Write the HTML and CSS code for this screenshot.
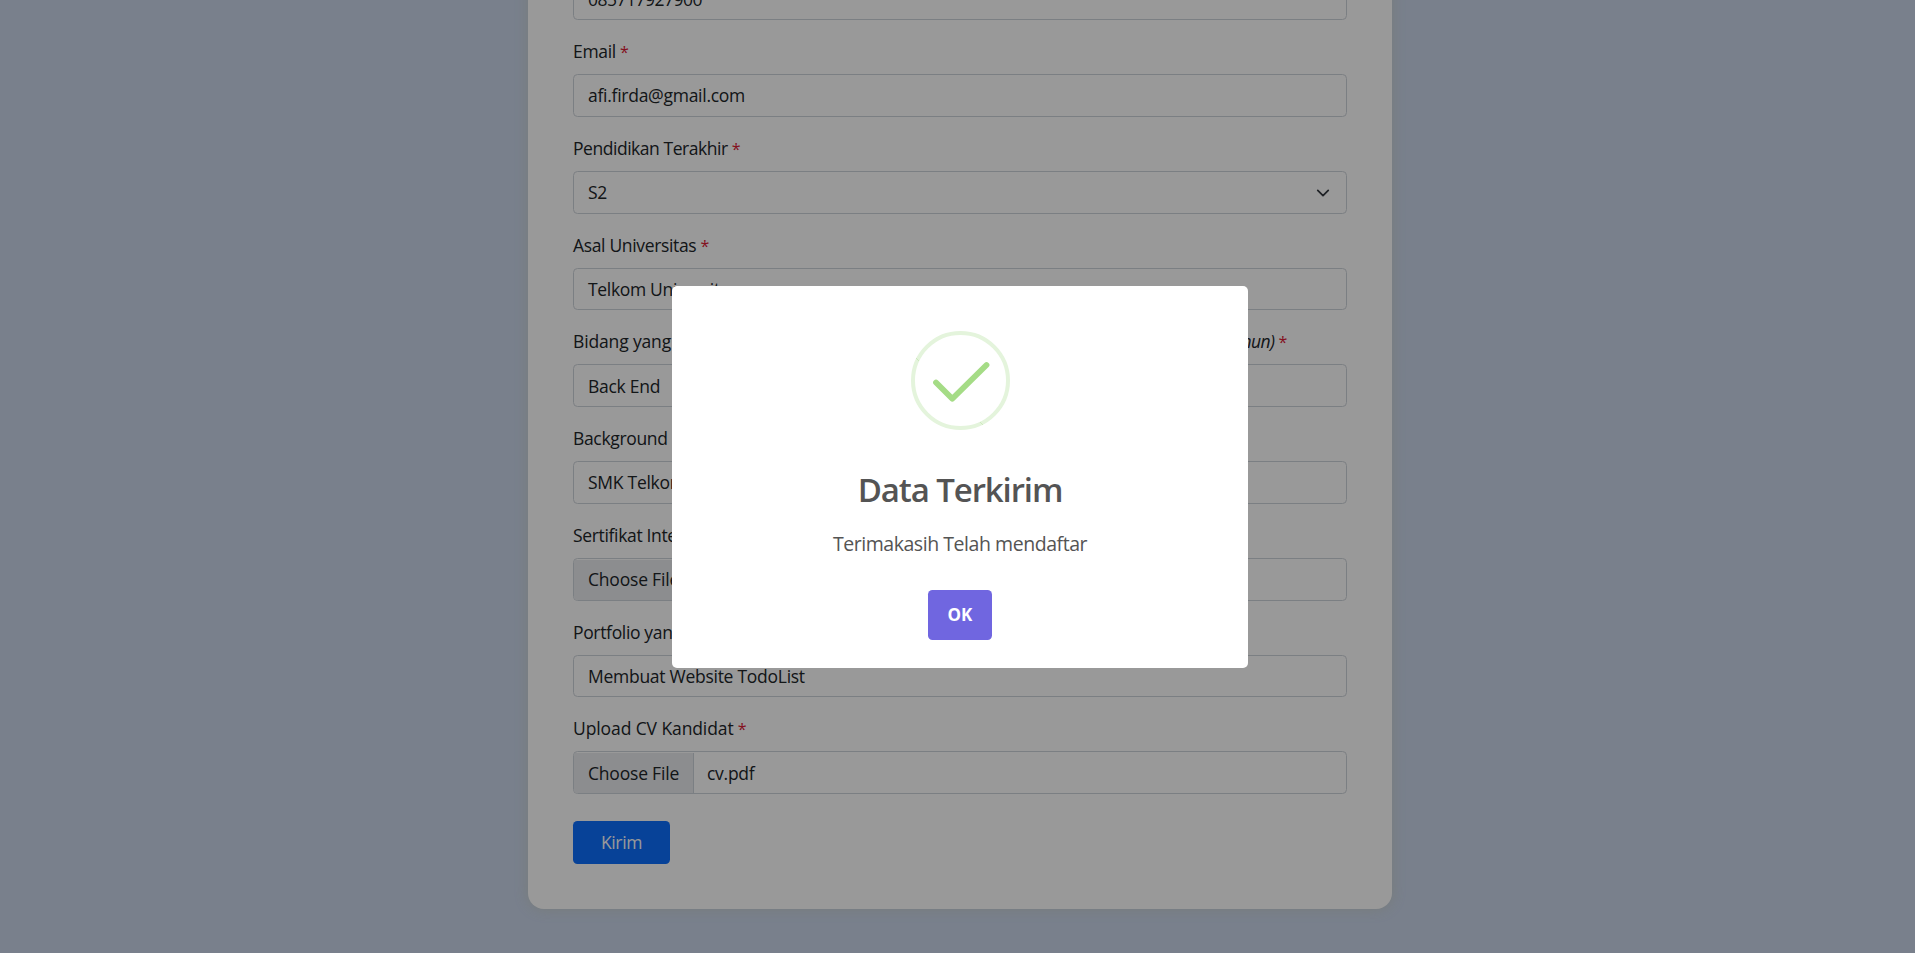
FILE: index.html
```html
<!DOCTYPE html>
<html lang="id">
<head>
<meta charset="utf-8">
<title>Form Pendaftaran</title>
<link rel="stylesheet" href="styles.css">
</head>
<body>
<main class="page">
  <form class="card">
    <div class="field"><div class="control"><span class="t-phone">085717927900</span></div></div>
    <div class="field"><label class="label">Email <span class="req">*</span></label><div class="control"><span>afi.firda@gmail.com</span></div></div>
    <div class="field"><label class="label"><span class="t-pend">Pendidikan Terakhir</span> <span class="req">*</span></label><div class="control select"><span>S2</span><svg class="chevron" viewBox="0 0 16 16"><path d="M2 5l6 6 6-6" fill="none" stroke="#343a40" stroke-width="2" stroke-linecap="round" stroke-linejoin="round"/></svg></div></div>
    <div class="field"><label class="label">Asal Universitas <span class="req">*</span></label><div class="control"><span class="t-univ">Telkom University</span></div></div>
    <div class="field"><label class="label wide"><span class="t-bidang">Bidang yang dikuasai</span><span><i class="t-tahun">(tahun)</i> <span class="req">*</span></span></label><div class="control"><span>Back End</span></div></div>
    <div class="field"><label class="label">Background</label><div class="control"><span>SMK Telkom</span></div></div>
    <div class="field"><label class="label">Sertifikat Inter</label><div class="control file"><span class="choose">Choose File</span></div></div>
    <div class="field"><label class="label">Portfolio yang</label><div class="control"><span>Membuat Website TodoList</span></div></div>
    <div class="field"><label class="label"><span class="t-upload">Upload CV Kandidat</span> <span class="req">*</span></label><div class="control file"><span class="choose">Choose File</span><span>cv.pdf</span></div></div>
    <button class="submit" type="button">Kirim</button>
  </form>
</main>
<div class="overlay">
  <section class="modal" role="dialog">
    <svg class="success" viewBox="0 0 99 99">
      <circle cx="49.5" cy="49.5" r="47.5" fill="none" stroke="#e4f4dc" stroke-width="4"/>
      <path d="M25 51.5L41.3 67.8L75.5 34" fill="none" stroke="#a5dc86" stroke-width="5.8" stroke-linecap="round" stroke-linejoin="round"/>
      <path d="M5 27l3 3M69 91l3 3" stroke="#cdeabd" stroke-width="1"/>
    </svg>
    <h2 class="title">Data Terkirim</h2>
    <p class="message">Terimakasih Telah mendaftar</p>
    <button class="ok" type="button">OK</button>
  </section>
</div>
</body>
</html>
```
FILE: styles.css
```css
* { box-sizing: border-box; }
body { margin: 0; height: 953px; overflow: hidden; background: #cad5ea; color: #212529; font: 400 17.5px/27px "Open Sans", "Noto Sans", sans-serif; letter-spacing: -.27px; }
.page { height: 953px; display: flex; flex-direction: column; justify-content: flex-end; align-items: center; padding: 0 0 44.25px 5px; }
.card { width: 864px; padding: 45px; background: #fff; border-radius: 16px; box-shadow: 0 0 14px rgba(200, 208, 200, .9); }
.field { margin-bottom: 18px; }
.label { display: block; height: 27px; margin-bottom: 9px; white-space: nowrap; letter-spacing: -.34px; }
.wide { display: flex; justify-content: space-between; width: 714px; }
.t-pend { letter-spacing: -.46px; }
.t-bidang { letter-spacing: -.15px; }
.t-tahun { letter-spacing: -.6px; }
.t-upload { letter-spacing: -.1px; }
.t-univ { letter-spacing: -.32px; }
.t-phone { letter-spacing: -.5px; }
.req { color: #dc1835; font-size: 16px; }
.control { height: 42.75px; display: flex; align-items: center; padding: 1px 14px 0; border: 1px solid #ced4da; border-radius: 4.5px; white-space: nowrap; overflow: hidden; }
.select { justify-content: space-between; }
.chevron { width: 14px; height: 14px; margin-right: 2px; }
.file { padding-left: 0; gap: 13px; }
.choose { align-self: stretch; display: flex; align-items: center; width: 120px; padding-left: 14px; background: #e9ecef; border-right: 1px solid #ced4da; letter-spacing: -.2px; }
.submit { display: block; width: 97px; height: 42.75px; margin-top: 27px; padding: 0; border: 0; border-radius: 4.5px; background: #0d6efd; color: #fff; font: inherit; letter-spacing: -.35px; }
.overlay { position: fixed; inset: 0; display: flex; align-items: center; justify-content: center; padding-left: 5px; background: rgba(0, 0, 0, .4); }
.modal { width: 576px; height: 382px; display: flex; flex-direction: column; align-items: center; padding-top: 45px; border-radius: 5px; background: #fff; color: #545454; }
.success { width: 99px; height: 99px; }
.title { margin: 34px 0 0; font-size: 33px; line-height: 52px; font-weight: 600; letter-spacing: -1.1px; }
.message { margin: 12px 0 0; font-size: 19.5px; line-height: 32px; letter-spacing: -.45px; }
.ok { width: 64px; height: 50px; margin-top: 30px; padding: 0; border: 0; border-radius: 4.5px; background: #7066e0; color: #fff; font: 700 17px "Open Sans", sans-serif; }
```
